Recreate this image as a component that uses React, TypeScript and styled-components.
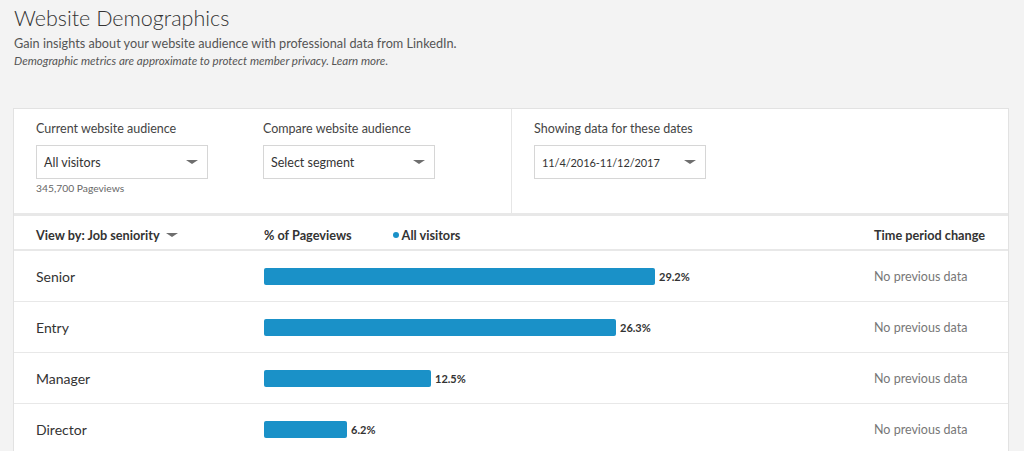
import React from "react";
import styled, { createGlobalStyle } from "styled-components";

const GlobalStyle = createGlobalStyle`
  body {
    margin: 0;
    background: #f3f3f3;
    font-family: Lato, "Open Sans", sans-serif;
    color: #333;
  }
`;

const Page = styled.div`
  padding: 4px 15px 0 13px;
`;

const Header = styled.div`
  padding-left: 1px;
`;

const Title = styled.h1`
  margin: 0;
  font-size: 21.5px;
  font-weight: 300;
  line-height: 28px;
  color: #333;
`;

const Subtitle = styled.p`
  margin: 2px 0 0;
  font-size: 12.7px;
  line-height: 18px;
  color: #555;
`;

const Note = styled.p`
  margin: 0;
  font-size: 11.6px;
  font-style: italic;
  line-height: 18px;
  color: #555;
`;

const Card = styled.div`
  margin-top: 38px;
  width: 994px;
  background: #fff;
  border: 1px solid #e2e2e2;
`;

const FilterBar = styled.div`
  display: grid;
  grid-template-columns: 498px 1fr;
  height: 104px;
  border-bottom: 3px solid #e8e8e8;
`;

const FilterGroup = styled.div<{ $divider?: boolean }>`
  display: flex;
  gap: 55px;
  padding: 12px 21px 0 22px;
  border-right: ${(p) => (p.$divider ? "1px solid #e6e6e6" : "none")};
`;

const Field = styled.div`
  display: flex;
  flex-direction: column;
`;

const FieldLabel = styled.label`
  font-size: 12.5px;
  line-height: 16px;
  color: #444;
  margin-bottom: 8px;
`;

const Select = styled.div<{ $narrow?: boolean }>`
  box-sizing: border-box;
  width: 172px;
  height: 34px;
  border: 1px solid #d6d6d6;
  display: flex;
  align-items: center;
  justify-content: space-between;
  padding: 0 9px 0 7px;
  font-size: ${(p) => (p.$narrow ? "11px" : "12.5px")};
  letter-spacing: ${(p) => (p.$narrow ? "-0.1px" : "0")};
  color: #333;
`;

const Caret = styled.span<{ $size?: number }>`
  width: 0;
  height: 0;
  border-left: ${(p) => p.$size ?? 6}px solid transparent;
  border-right: ${(p) => p.$size ?? 6}px solid transparent;
  border-top: ${(p) => (p.$size ?? 6) * 0.8}px solid #6e6e6e;
`;

const Hint = styled.span`
  margin-top: 3px;
  font-size: 10.3px;
  color: #666;
`;

const TableRow = styled.div<{ $head?: boolean }>`
  display: grid;
  grid-template-columns: 228px 610px 1fr;
  align-items: center;
  box-sizing: border-box;
  padding: ${(p) => (p.$head ? "5px 0 0 22px" : "0 0 0 22px")};
  height: ${(p) => (p.$head ? 35 : 51)}px;
  border-bottom: ${(p) => (p.$head ? "2px solid #e8e8e8" : "1px solid #e8e8e8")};
  &:last-child {
    border-bottom: none;
  }
`;

const HeadCell = styled.div`
  display: flex;
  align-items: center;
  gap: 6px;
  font-size: 12.7px;
  font-weight: 700;
  color: #333;
`;

const Legend = styled.span`
  display: flex;
  align-items: center;
  gap: 3px;
  margin-left: 35px;
`;

const Dot = styled.span`
  width: 6px;
  height: 6px;
  border-radius: 50%;
  background: #1a91c8;
`;

const Label = styled.div`
  font-size: 14px;
  color: #333;
`;

const BarCell = styled.div`
  display: flex;
  align-items: center;
  gap: 4px;
`;

const Bar = styled.div`
  height: 17px;
  background: #1a91c8;
  border-radius: 2px;
`;

const Value = styled.span`
  font-size: 11px;
  font-weight: 700;
  color: #333;
`;

const Change = styled.div`
  font-size: 12.5px;
  color: #777;
`;

const rows = [
  { label: "Senior", pct: 29.2 },
  { label: "Entry", pct: 26.3 },
  { label: "Manager", pct: 12.5 },
  { label: "Director", pct: 6.2 },
];

const App: React.FC = () => {
  return (
    <Page>
      <GlobalStyle />
      <Header>
        <Title>Website Demographics</Title>
        <Subtitle>Gain insights about your website audience with professional data from LinkedIn.</Subtitle>
        <Note>Demographic metrics are approximate to protect member privacy. Learn more.</Note>
      </Header>
      <Card>
        <FilterBar>
          <FilterGroup $divider>
            <Field>
              <FieldLabel>Current website audience</FieldLabel>
              <Select>
                All visitors
                <Caret />
              </Select>
              <Hint>345,700 Pageviews</Hint>
            </Field>
            <Field>
              <FieldLabel>Compare website audience</FieldLabel>
              <Select>
                Select segment
                <Caret />
              </Select>
            </Field>
          </FilterGroup>
          <FilterGroup>
            <Field>
              <FieldLabel>Showing data for these dates</FieldLabel>
              <Select $narrow>
                11/4/2016-11/12/2017
                <Caret />
              </Select>
            </Field>
          </FilterGroup>
        </FilterBar>
        <TableRow $head>
          <HeadCell>
            View by: Job seniority
            <Caret $size={6} />
          </HeadCell>
          <HeadCell>
            % of Pageviews
            <Legend>
              <Dot />
              All visitors
            </Legend>
          </HeadCell>
          <HeadCell>Time period change</HeadCell>
        </TableRow>
        {rows.map((r) => (
          <TableRow key={r.label}>
            <Label>{r.label}</Label>
            <BarCell>
              <Bar style={{ width: `${Math.round(r.pct * 13.39)}px` }} />
              <Value>{r.pct}%</Value>
            </BarCell>
            <Change>No previous data</Change>
          </TableRow>
        ))}
      </Card>
    </Page>
  );
};

export default App;
